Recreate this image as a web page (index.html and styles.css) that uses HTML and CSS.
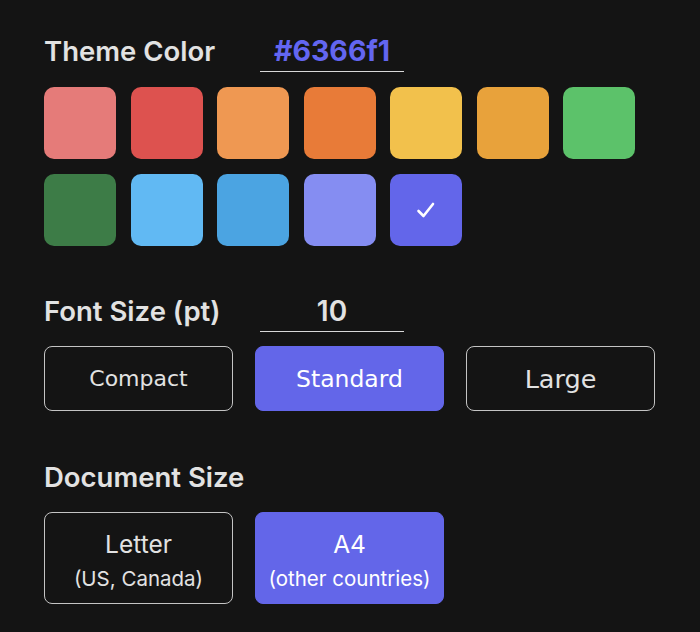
FILE: index.html
```html
<!DOCTYPE html>
<html>
<head>
<meta charset="utf-8">
<link rel="stylesheet" href="styles.css">
</head>
<body>
<div class="panel">
  <div class="row-head">
    <span class="label">Theme Color</span>
    <span class="field hex">#6366f1</span>
  </div>
  <div class="swatches">
    <div class="sw c1"></div>
    <div class="sw c2"></div>
    <div class="sw c3"></div>
    <div class="sw c4"></div>
    <div class="sw c5"></div>
    <div class="sw c6"></div>
    <div class="sw c7"></div>
    <div class="sw c8"></div>
    <div class="sw c9"></div>
    <div class="sw c10"></div>
    <div class="sw c11"></div>
    <div class="sw c12 selected">
      <svg width="20" height="18" viewBox="0 0 20 18"><path d="M2.5 10 L7.5 15 L17 3" fill="none" stroke="#fff" stroke-width="2.6" stroke-linecap="round" stroke-linejoin="round"/></svg>
    </div>
  </div>

  <div class="row-head second">
    <span class="label">Font Size (pt)</span>
    <span class="field num">10</span>
  </div>
  <div class="opts">
    <div class="opt small">Compact</div>
    <div class="opt active medium">Standard</div>
    <div class="opt big">Large</div>
  </div>

  <div class="row-head third">
    <span class="label">Document Size</span>
  </div>
  <div class="opts docs">
    <div class="opt doc"><span class="main">Letter</span><span class="sub">(US, Canada)</span></div>
    <div class="opt doc active"><span class="main">A4</span><span class="sub">(other countries)</span></div>
  </div>
</div>
</body>
</html>
```

FILE: styles.css
```css
html, body {
  margin: 0;
  padding: 0;
  background: #141414;
}
body {
  width: 700px;
  height: 632px;
  overflow: hidden;
  font-family: "Inter", "Liberation Sans", sans-serif;
}
.panel {
  padding: 33px 0 0 44px;
}
.row-head {
  display: flex;
  align-items: flex-start;
}
.label {
  width: 216px;
  font-size: 27.5px;
  font-weight: 600;
  color: #e2e2e2;
  line-height: 36px;
}
.field {
  width: 144px;
  border-bottom: 1.5px solid #d8d8d8;
  padding-bottom: 2px;
  text-align: center;
  font-size: 28.5px;
  font-weight: 700;
  line-height: 36px;
}
.hex {
  color: #6366f1;
}
.num {
  color: #e2e2e2;
  font-weight: 600;
  font-size: 28px;
}
.swatches {
  display: grid;
  grid-template-columns: repeat(7, 72px);
  column-gap: 14.5px;
  row-gap: 15px;
  margin-top: 14.5px;
}
.sw {
  width: 72px;
  height: 72px;
  border-radius: 10px;
  display: flex;
  align-items: center;
  justify-content: center;
}
.c1 { background: #e57b79; }
.c2 { background: #dd524f; }
.c3 { background: #ef9852; }
.c4 { background: #e87b38; }
.c5 { background: #f2c14c; }
.c6 { background: #e8a23b; }
.c7 { background: #5cc26a; }
.c8 { background: #3d7c47; }
.c9 { background: #61b9f3; }
.c10 { background: #4ba4e2; }
.c11 { background: #858df2; }
.c12 { background: #6366ea; }

.second { margin-top: 47px; }
.third { margin-top: 48px; }

.opts {
  display: flex;
  gap: 22px;
  margin-top: 14.5px;
}
.opt {
  width: 189px;
  height: 65px;
  box-sizing: border-box;
  border: 1px solid #c4c4c4;
  border-radius: 8px;
  display: flex;
  align-items: center;
  justify-content: center;
  color: #e2e2e2;
  font-family: "DejaVu Sans", "Open Sans", sans-serif;
}
.opt.active {
  background: #6366e9;
  border-color: #6366e9;
  color: #ffffff;
}
.small { font-size: 22px; }
.medium { font-size: 23.5px; }
.big { font-size: 25.5px; }

.docs { margin-top: 17px; }
.doc {
  height: 92px;
  flex-direction: column;
  justify-content: flex-start;
  padding-top: 16px;
  font-family: "Inter", "Liberation Sans", sans-serif;
}
.doc .main {
  font-size: 24.5px;
  line-height: 30px;
}
.doc .sub {
  font-size: 20.5px;
  line-height: 28px;
  margin-top: 6px;
}
```
